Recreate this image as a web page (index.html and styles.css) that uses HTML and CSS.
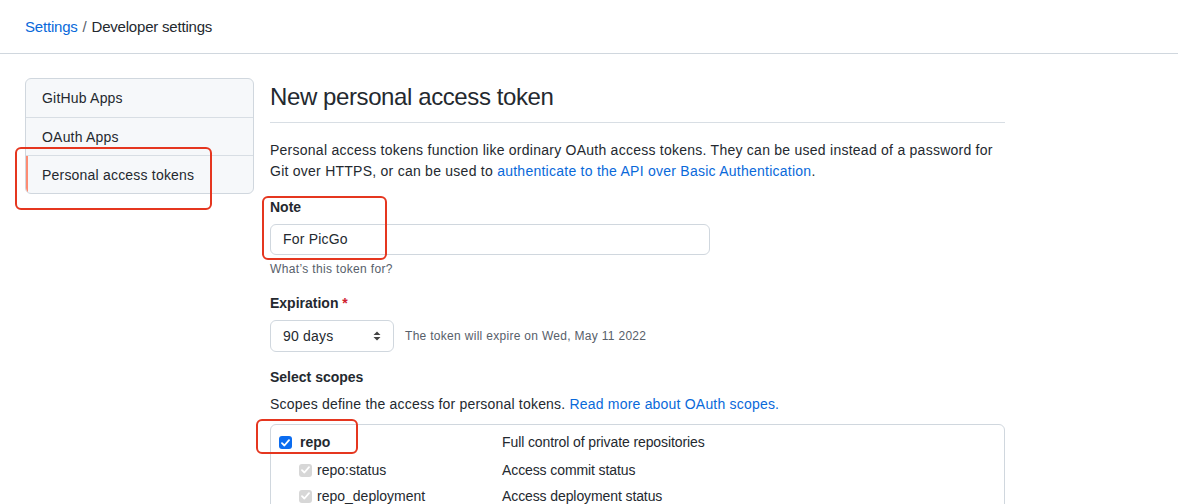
FILE: index.html
```html
<!DOCTYPE html>
<html>
<head>
<meta charset="utf-8">
<link rel="stylesheet" href="styles.css">
</head>
<body>
<header class="topbar">
  <nav class="crumbs"><a href="#">Settings</a> <span class="sep">/</span> Developer settings</nav>
</header>
<div class="layout">
  <aside class="side">
    <ul class="menu">
      <li class="menu-item">GitHub Apps</li>
      <li class="menu-item">OAuth Apps</li>
      <li class="menu-item selected">Personal access tokens</li>
    </ul>
    <span class="mark mark-side"></span>
  </aside>
  <main class="main">
    <h1 class="title">New personal access token</h1>
    <p class="intro">Personal access tokens function like ordinary OAuth access tokens. They can be used instead of a password for Git over HTTPS, or can be used to <a href="#">authenticate to the API over Basic Authentication</a>.</p>

    <div class="field note-field">
      <label class="label">Note</label>
      <div class="input">For PicGo</div>
      <p class="hint">What’s this token for?</p>
      <span class="mark mark-note"></span>
    </div>

    <div class="field">
      <label class="label">Expiration <span class="req">*</span></label>
      <div class="exp-row">
        <div class="select">90 days
          <svg class="updown" width="8" height="10" viewBox="0 0 8 10"><path d="M4 0.5 L7.5 4 H0.5 Z M4 9.5 L7.5 6 H0.5 Z" fill="#444"/></svg>
        </div>
        <span class="exp-note">The token will expire on Wed, May 11 2022</span>
      </div>
    </div>

    <div class="field">
      <label class="label">Select scopes</label>
      <p class="scopes-desc">Scopes define the access for personal tokens. <a href="#">Read more about OAuth scopes.</a></p>
      <div class="scopes">
        <div class="scope parent">
          <span class="scope-name"><span class="cb on"><svg width="9" height="8" viewBox="0 0 9 8"><path d="M1 4.2 L3.4 6.5 L8 1.2" stroke="#fff" stroke-width="1.8" fill="none" stroke-linecap="round" stroke-linejoin="round"/></svg></span><b>repo</b></span>
          <span class="scope-desc">Full control of private repositories</span>
          <span class="mark mark-repo"></span>
        </div>
        <div class="scope child">
          <span class="scope-name"><span class="cb dis"><svg width="9" height="8" viewBox="0 0 9 8"><path d="M1 4.2 L3.4 6.5 L8 1.2" stroke="#fff" stroke-width="1.8" fill="none" stroke-linecap="round" stroke-linejoin="round"/></svg></span>repo:status</span>
          <span class="scope-desc">Access commit status</span>
        </div>
        <div class="scope child">
          <span class="scope-name"><span class="cb dis"><svg width="9" height="8" viewBox="0 0 9 8"><path d="M1 4.2 L3.4 6.5 L8 1.2" stroke="#fff" stroke-width="1.8" fill="none" stroke-linecap="round" stroke-linejoin="round"/></svg></span>repo_deployment</span>
          <span class="scope-desc">Access deployment status</span>
        </div>
      </div>
    </div>
  </main>
</div>
</body>
</html>
```
FILE: styles.css
```css
* { box-sizing: border-box; }
html, body { margin: 0; padding: 0; background: #fff; }
body {
  font-family: "Liberation Sans", Arial, sans-serif;
  font-size: 14px;
  line-height: 21px;
  color: #24292f;
  overflow: hidden;
}
a { color: #0969da; text-decoration: none; }
.topbar {
  height: 54px;
  border-bottom: 1px solid #d0d7de;
  padding: 16px 25px 0;
}
.crumbs { font-size: 15px; line-height: 22px; color: #24292f; letter-spacing: -0.2px; }
.crumbs .sep { color: #57606a; margin: 0 1px; }
.layout {
  display: flex;
  gap: 16px;
  padding: 24px 0 0 25px;
}
.side { width: 229px; flex: none; position: relative; }
.menu {
  list-style: none;
  margin: 0;
  padding: 0;
  border: 1px solid #d0d7de;
  border-radius: 6px;
  background: #f6f8fa;
  overflow: hidden;
  letter-spacing: 0.2px;
}
.menu-item {
  height: 38px;
  line-height: 38px;
  padding-left: 16px;
  border-top: 1px solid #d8dee4;
  position: relative;
}
.menu-item:first-child { border-top: 0; }
.menu-item.selected::before {
  content: "";
  position: absolute;
  left: 0; top: 0; bottom: 0;
  width: 2px;
  background: #fd8c73;
}
.mark {
  position: absolute;
  border: 2px solid #e5361f;
  border-radius: 6px;
  pointer-events: none;
}
.mark-side { left: -10px; top: 69px; width: 197px; height: 63px; }
.main { width: 735px; flex: none; }
.title {
  margin: 4px 0 0;
  font-size: 24px;
  line-height: 30px;
  font-weight: 400;
  letter-spacing: -0.4px;
  padding-bottom: 10px;
  border-bottom: 1px solid #d8dee4;
}
.intro { margin: 17px 0 0; letter-spacing: 0.25px; }
.field { margin-top: 15px; position: relative; }
.label { display: block; font-weight: 700; }
.req { color: #cf222e; }
.input {
  margin-top: 6px;
  width: 440px;
  height: 31px;
  border: 1px solid #d0d7de;
  border-radius: 6px;
  padding: 0 12px;
  line-height: 29px;
  letter-spacing: 0.2px;
}
.hint { margin: 5px 0 0; font-size: 12px; line-height: 18px; color: #57606a; letter-spacing: 0.35px; }
.mark-note { left: -8px; top: -1px; width: 125px; height: 64px; }
.exp-row { display: flex; align-items: center; gap: 11px; margin-top: 6px; }
.select {
  width: 124px;
  height: 32px;
  border: 1px solid #d0d7de;
  border-radius: 6px;
  padding: 0 12px;
  line-height: 30px;
  display: flex;
  justify-content: space-between;
  align-items: center;
  letter-spacing: 0.2px;
}
.exp-note { font-size: 12px; color: #57606a; letter-spacing: 0.3px; }
.scopes-desc { margin: 6px 0 0; letter-spacing: 0.2px; }
.scopes {
  margin-top: 9px;
  border: 1px solid #d0d7de;
  border-radius: 6px;
  padding: 3px 0 0 8px;
  height: 120px;
}
.scope { display: flex; align-items: center; height: 29px; position: relative; }
.scope.child { height: 26px; padding-left: 20px; }
.scope-name { display: flex; align-items: center; gap: 8px; width: 223px; }
.scope.child .scope-name { width: 203px; gap: 5px; }
.scope-desc { color: #24292f; letter-spacing: -0.1px; }
.cb {
  width: 13px; height: 13px;
  border-radius: 3px;
  display: inline-flex;
  align-items: center;
  justify-content: center;
}
.cb.on { background: #0b6cf0; }
.cb.dis { background: #d7d7d7; }
.mark-repo { left: -23px; top: -9px; width: 102px; height: 35px; }
```
